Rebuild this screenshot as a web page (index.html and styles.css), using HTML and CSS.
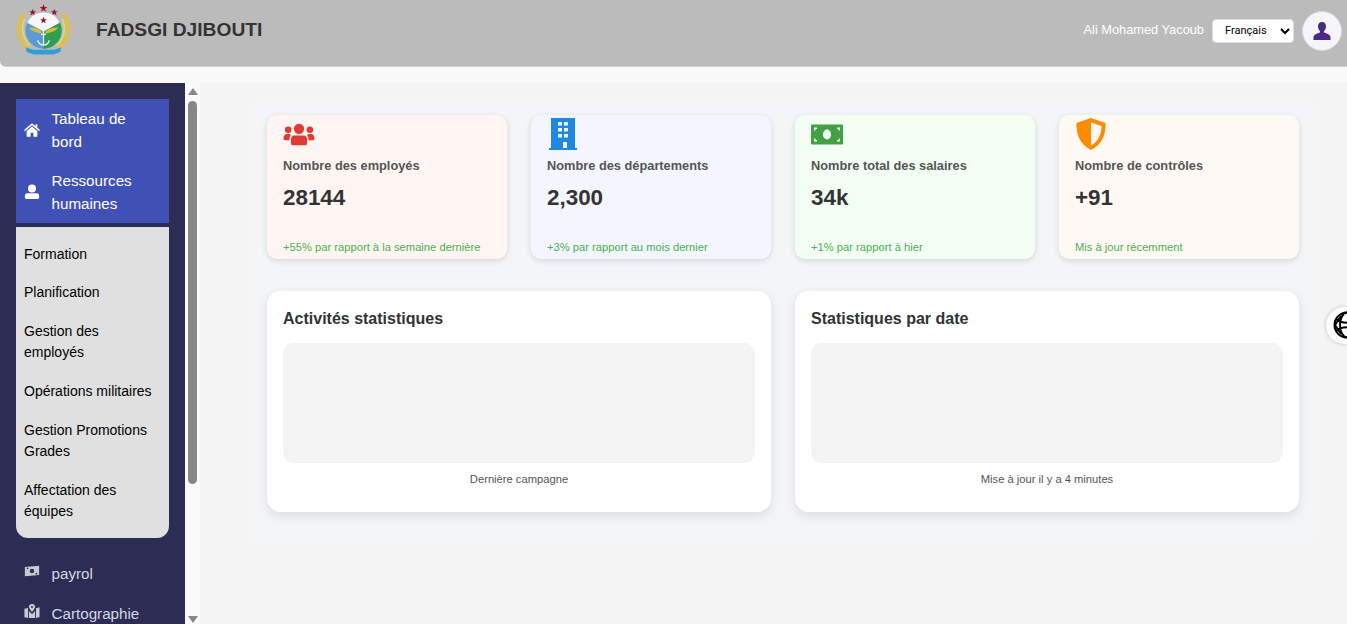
FILE: index.html
```html
<!DOCTYPE html>
<html lang="fr">
<head>
    <meta charset="utf-8">
    <title>FADSGI Djibouti</title>
    <link rel="stylesheet" href="styles.css">
</head>
<body>
    <header class="topbar">
        <div class="brand">
            <svg class="logo" viewBox="0 0 54 54" aria-label="Logo FADSGI">
                <polygon points="27,0 28,3 31,3 28.500,5 29.500,8 27,6 24.500,8 25.500,5 23,3 26,3" fill="#a3122a"/>
                <polygon points="16,5 17,7.500 19.500,7.500 17.500,9 18.300,11.800 16,10 13.700,11.800 14.500,9 12.500,7.500 15,7.500" fill="#a3122a"/>
                <polygon points="38,5 39,7.500 41.500,7.500 39.500,9 40.300,11.800 38,10 35.700,11.800 36.500,9 34.500,7.500 37,7.500" fill="#a3122a"/>
                <path d="M7 10C0 19 -1 34 11 45M47 10C54 19 55 34 43 45" fill="none" stroke="#e6c229" stroke-width="3"/>
                <path d="M8 15C4 23 5 34 13 42M46 15C50 23 49 34 41 42" fill="none" stroke="#efd566" stroke-width="1.500"/>
                <circle cx="27" cy="27" r="18.500" fill="#5b9bd5"/>
                <path d="M27 27L45.500 27A18.500 18.500 0 0 1 27 45.500Z" fill="#2e9e4f"/>
                <path d="M27 27L40 14A18.500 18.500 0 0 1 45.500 27Z" fill="#2e9e4f"/>
                <path d="M10.500 19C13.500 12.500 20 8.500 27 8.500C34 8.500 40.500 12.500 43.500 19L27 28Z" fill="#f7f7f7"/>
                <polygon points="27,13 28,15.500 30.500,15.500 28.500,17 29.300,19.500 27,18 24.700,19.500 25.500,17 23.500,15.500 26,15.500" fill="#a3122a"/>
                <path d="M12 24C16 24 21 25 25 28L25 30C20 29.500 15 28 12 24ZM42 24C38 24 33 25 29 28L29 30C34 29.500 39 28 42 24Z" fill="#d9bf3a"/>
                <path d="M27 27V42M21 37C22 40 24 42 27 42C30 42 32 40 33 37M24.500 31H29.500" fill="none" stroke="#eef3f7" stroke-width="1.300"/>
                <path d="M9 44L16 46.500H38L45 44L44 49L37 51.500H17L10 49Z" fill="#2d9fd8"/>
            </svg>
            <span class="brand-name">FADSGI DJIBOUTI</span>
        </div>
        <div class="user-box">
            <span class="user-name">Ali Mohamed Yacoub</span>
            <select class="lang">
                <option>Français</option>
            </select>
            <div class="avatar">
                <svg viewBox="0 0 20 20" width="20" height="20">
                    <path d="M10 1C7.300 1 6 3 6 5.500C6 7.500 7 9.300 8 10.200V11.500C6 12.300 2 13 1.500 16V19H18.500V16C18 13 14 12.300 12 11.500V10.200C13 9.300 14 7.500 14 5.500C14 3 12.700 1 10 1Z" fill="#4b2a86"/>
                </svg>
            </div>
        </div>
    </header>

    <div class="layout">
        <aside class="sidebar">
            <div class="active-group">
                <a class="nav-item">
                    <svg class="nav-icon" viewBox="0 0 18 16"><path d="M9 0.500L0 8L1 9.300L9 2.700L17 9.300L18 8L15 5.500V1.500H13V3.800ZM9 4L3 9V15.500H7.500V11H10.500V15.500H15V9Z" fill="#fff"/></svg>
                    <span>Tableau de bord</span>
                </a>
                <a class="nav-item">
                    <svg class="nav-icon" viewBox="0 0 18 18"><circle cx="9" cy="5" r="4.500" fill="#fff"/><path d="M3.500 10.500H14.500C16 10.500 17 12 17 13.500V15C17 16.500 16 17 15 17H3C2 17 1 16.500 1 15V13.500C1 12 2 10.500 3.500 10.500Z" fill="#fff"/></svg>
                    <span>Ressources humaines</span>
                </a>
            </div>
            <ul class="submenu">
                <li>Formation</li>
                <li>Planification</li>
                <li>Gestion des employés</li>
                <li>Opérations militaires</li>
                <li>Gestion Promotions Grades</li>
                <li>Affectation des équipes</li>
            </ul>
            <a class="nav-item muted">
                <svg class="nav-icon icon-top" viewBox="0 0 18 14"><path d="M1 2.500L17 1V11.500L1 13Z" fill="#c6cbd2"/><circle cx="9" cy="7" r="2.500" fill="#2c2c54"/><circle cx="4" cy="4" r="1" fill="#2c2c54"/><circle cx="14" cy="10" r="1" fill="#2c2c54"/></svg>
                <span>payrol</span>
            </a>
            <a class="nav-item muted">
                <svg class="nav-icon icon-top" viewBox="0 0 18 16"><path d="M9 0C6.800 0 5.500 1.500 5.500 3.300C5.500 5 7.500 7.500 9 9C10.500 7.500 12.500 5 12.500 3.300C12.500 1.500 11.200 0 9 0ZM9 2.300A1.100 1.100 0 1 1 9 4.500A1.100 1.100 0 0 1 9 2.300ZM0.500 5.500L4.500 4.500V16L0.500 15ZM13.500 5L17.500 3.800V14.800L13.500 16ZM5.500 8L8.500 11H9.500L12.500 8V16L5.500 16Z" fill="#c6cbd2"/></svg>
                <span>Cartographie</span>
            </a>
        </aside>
        <div class="scrollbar">
            <div class="arrow-up"></div>
            <div class="thumb"></div>
            <div class="arrow-down"></div>
        </div>

        <main class="content">
            <div class="panel">
                <section class="stats">
                    <article class="stat stat-red">
                        <svg class="stat-icon" viewBox="0 0 34 24">
                            <circle cx="17" cy="6" r="5.500" fill="#e53935"/>
                            <circle cx="5.500" cy="7" r="3.500" fill="#e53935"/>
                            <circle cx="28.500" cy="7" r="3.500" fill="#e53935"/>
                            <path d="M11.500 13H22.500C24.500 13 25.500 15 25.500 17V21C25.500 23 24.500 23.500 23 23.500H11C9.500 23.500 8.500 23 8.500 21V17C8.500 15 9.500 13 11.500 13Z" fill="#e53935"/>
                            <path d="M7 11.500C7.500 12 8 12.300 8.500 12.500C7.500 13.500 7 15 6.800 18H2C1 18 0.500 17.500 0.500 16.500C0.500 13.500 2 11.500 4 11.500ZM27 11.500C26.500 12 26 12.300 25.500 12.500C26.500 13.500 27 15 27.200 18H32C33 18 33.500 17.500 33.500 16.500C33.500 13.500 32 11.500 30 11.500Z" fill="#e53935"/>
                        </svg>
                        <h3>Nombre des employés</h3>
                        <p class="stat-value">28144</p>
                        <p class="stat-note">+55% par rapport à la semaine dernière</p>
                    </article>
                    <article class="stat stat-blue">
                        <svg class="stat-icon icon-building" viewBox="0 0 28 32">
                            <path d="M2 0H26V30H28V32H0V30H2Z" fill="#1e88e5"/>
                            <path d="M6 4H10V7.500H6ZM12 4H16V7.500H12ZM6 10H10V13.500H6ZM12 10H16V13.500H12ZM6 16H10V19.500H6ZM12 16H16V19.500H12ZM11 24H15V30H11Z" fill="#f4f6ff" transform="translate(3 0)"/>
                        </svg>
                        <h3>Nombre des départements</h3>
                        <p class="stat-value">2,300</p>
                        <p class="stat-note">+3% par rapport au mois dernier</p>
                    </article>
                    <article class="stat stat-green">
                        <svg class="stat-icon" viewBox="0 0 32 20">
                            <rect x="0" y="0" width="32" height="20" rx="1" fill="#43a047"/>
                            <ellipse cx="16" cy="10" rx="4" ry="5" fill="#f3fff5"/>
                            <path d="M3 3H6V4.500H4.500V6H3ZM29 3H26V4.500H27.500V6H29ZM3 17H6V15.500H4.500V14H3ZM29 17H26V15.500H27.500V14H29Z" fill="#f3fff5"/>
                        </svg>
                        <h3>Nombre total des salaires</h3>
                        <p class="stat-value">34k</p>
                        <p class="stat-note">+1% par rapport à hier</p>
                    </article>
                    <article class="stat stat-orange">
                        <svg class="stat-icon icon-shield" viewBox="0 0 30 32">
                            <path d="M15 0L29.500 5C30 15 27 26 15 32C3 26 0 15 0.500 5Z" fill="#fb8c00"/>
                            <path d="M15 4.500L25.500 8C25.500 15 23 23 15 27.500Z" fill="#fff9f5"/>
                        </svg>
                        <h3>Nombre de contrôles</h3>
                        <p class="stat-value">+91</p>
                        <p class="stat-note">Mis à jour récemment</p>
                    </article>
                </section>
                <section class="charts">
                    <article class="chart-card">
                        <h2>Activités statistiques</h2>
                        <div class="chart-box"></div>
                        <p class="chart-note">Dernière campagne</p>
                    </article>
                    <article class="chart-card">
                        <h2>Statistiques par date</h2>
                        <div class="chart-box"></div>
                        <p class="chart-note">Mise à jour il y a 4 minutes</p>
                    </article>
                </section>
            </div>
        </main>
    </div>

    <div class="float-widget">
        <svg viewBox="0 0 28 28" width="28" height="28">
            <g fill="none" stroke="#000" stroke-width="2">
                <circle cx="14" cy="14" r="12.500"/>
                <ellipse cx="14" cy="14" rx="7" ry="12.500"/>
                <path d="M3 8C8 13 20 13 25 8M3 20C8 15 20 15 25 20M2 14L8 5M2 14L8 23"/>
            </g>
        </svg>
    </div>
</body>
</html>
```

FILE: styles.css
```css
*{
    box-sizing: border-box;
}
body{
    margin: 0;
    height: 100vh;
    overflow: hidden;
    background-color: #f9f9f9;
    font-family: "Liberation Sans", Arial, sans-serif;
}
.topbar{
    height: 67px;
    display: flex;
    align-items: center;
    justify-content: space-between;
    padding: 0 5px 0 17px;
    background-color: #bbbbbb;
    border-bottom: 1px solid #cfcfcf;
    border-bottom-left-radius: 6px;
}
.brand{
    display: flex;
    align-items: center;
    gap: 26px;
    margin-top: -5px;
}
.logo{
    width: 53px;
    height: 53px;
}
.brand-name{
    margin-top: -2px;
    font-size: 19.200px;
    font-weight: bold;
    color: #333;
}
.user-box{
    display: flex;
    align-items: center;
    gap: 8px;
    margin-top: -5px;
}
.user-name{
    margin-top: -2px;
    font-size: 12.800px;
    color: #fff;
}
.lang{
    width: 82px;
    height: 24px;
    padding-left: 8px;
    font-size: 11px;
    font-family: Roboto, "Liberation Sans", sans-serif;
    background-color: #fff;
    border: 1px solid #ddd;
    border-radius: 4px;
}
.avatar{
    width: 40px;
    height: 40px;
    display: flex;
    align-items: center;
    justify-content: center;
    background-color: #f6f6fa;
    border: 1px solid #d8d8d8;
    border-radius: 50%;
}
.layout{
    height: 541px;
    margin-top: 16px;
    display: flex;
}
.sidebar{
    width: 185px;
    flex-shrink: 0;
    padding: 16px 16px 0;
    overflow: hidden;
    background-color: #2c2c54;
}
.scrollbar{
    width: 15px;
    flex-shrink: 0;
    display: flex;
    flex-direction: column;
    align-items: center;
    background-color: #fafafa;
}
.arrow-up{
    margin-top: 5px;
    border: solid transparent;
    border-width: 0 5px 7px;
    border-bottom-color: #888;
}
.thumb{
    width: 9px;
    height: 383px;
    margin-top: 6px;
    background-color: #888;
    border-radius: 5px;
}
.arrow-down{
    margin: auto 0 1px;
    border: solid transparent;
    border-width: 7px 5px 0;
    border-top-color: #888;
}
.active-group{
    background-color: #3f51b5;
}
.nav-item{
    display: flex;
    align-items: center;
    gap: 11.500px;
    padding: 8px 12px 8px 8px;
    font-size: 15.200px;
    line-height: 23px;
    color: #fff;
}
.nav-icon{
    width: 16px;
    height: 16px;
    flex-shrink: 0;
}
.icon-top{
    margin-top: -5px;
}
.submenu{
    list-style: none;
    margin: 4px 0 16px;
    padding: 16.500px 8px 15.300px;
    background-color: #e0e0e0;
    border-radius: 0 0 12px 12px;
}
.submenu li{
    padding: 0 0 17.500px;
    font-size: 14px;
    line-height: 21.300px;
    color: #000;
}
.submenu li:last-child{
    padding-bottom: 0;
}
.muted{
    margin-bottom: 1px;
    color: #cfd8e3;
}
.content{
    flex: 1;
    padding: 16px 32px 0 51px;
    background-color: #f4f4f4;
}
.panel{
    padding: 16px 16px 33px;
    background-color: #f4f5f7;
    border-radius: 8px;
}
.stats{
    display: grid;
    grid-template-columns: repeat(4, 1fr);
    gap: 24px;
}
.stat{
    height: 144px;
    padding: 0 16px;
    display: flex;
    flex-direction: column;
    border-radius: 10px;
    box-shadow: 0 2px 6px rgba(0, 0, 0, 0.12);
}
.stat-red{
    background-color: #fff5f3;
}
.stat-blue{
    background-color: #f4f6ff;
}
.stat-green{
    background-color: #f3fff5;
}
.stat-orange{
    background-color: #fff9f5;
}
.stat-icon{
    display: block;
    width: 32px;
    height: 23px;
    margin: 8px 0 12px;
}
.icon-building{
    width: 28px;
    height: 32px;
    margin: 3px 0 8px 2px;
}
.icon-shield{
    width: 30px;
    height: 32px;
    margin: 3px 0 8px 1px;
}
.stat h3{
    margin: 0;
    font-size: 12.800px;
    line-height: 16px;
    font-weight: bold;
    color: #555;
}
.stat-value{
    margin: 11px 0 0;
    font-size: 22.400px;
    line-height: 26px;
    font-weight: bold;
    color: #333;
}
.stat-note{
    margin: auto 0 5px;
    font-size: 11.200px;
    line-height: 13px;
    color: #4caf50;
}
.charts{
    display: grid;
    grid-template-columns: repeat(2, 1fr);
    gap: 24px;
    margin-top: 32px;
}
.chart-card{
    height: 221px;
    padding: 16px;
    background-color: #fff;
    border-radius: 14px;
    box-shadow: 0 4px 12px rgba(0, 0, 0, 0.1);
}
.chart-card h2{
    margin: 1px 0 0;
    font-size: 16px;
    line-height: 22px;
    font-weight: bold;
    color: #333;
}
.chart-box{
    height: 120px;
    margin-top: 13px;
    background-color: #f4f4f4;
    border-radius: 10px;
}
.chart-note{
    margin: 10px 0 0;
    font-size: 11.200px;
    line-height: 13px;
    text-align: center;
    color: #555;
}
.float-widget{
    position: absolute;
    top: 307px;
    right: 0;
    width: 21px;
    height: 37px;
    padding: 4px 0 0 7px;
    overflow: hidden;
    background-color: #fff;
    border-radius: 19px 0 0 19px;
    box-shadow: 0 0 4px rgba(0, 0, 0, 0.2);
}
```
